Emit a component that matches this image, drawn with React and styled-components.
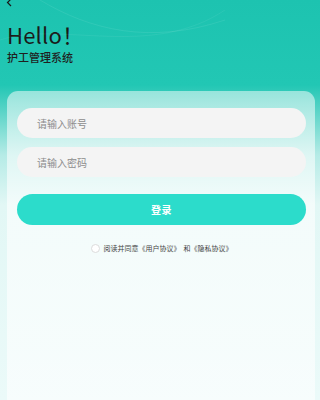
import React from 'react';
import styled, { createGlobalStyle } from 'styled-components';

const GlobalStyle = createGlobalStyle`
  html, body {
    margin: 0;
    padding: 0;
  }
  body {
    font-family: "Noto Sans CJK SC", "Noto Sans", sans-serif;
  }
  * {
    box-sizing: border-box;
  }
`;

const Page = styled.div`
  position: relative;
  width: 100%;
  min-height: 400px;
  display: flex;
  flex-direction: column;
  overflow: hidden;
  background: linear-gradient(
    180deg,
    #1dc3b0 0px,
    #22c7b4 85px,
    #62d6ca 115px,
    #b5ebe6 155px,
    #e2f7f5 205px,
    #ebfaf9 400px
  );
`;

const Wave = styled.svg`
  position: absolute;
  top: 0;
  left: 0;
  pointer-events: none;
`;

const BackButton = styled.div`
  height: 8px;
  padding-left: 6px;
  display: flex;
  align-items: flex-start;
`;

const Header = styled.div`
  padding: 12px 7px 0;
`;

const Title = styled.h1`
  margin: 0;
  font-size: 22px;
  line-height: 28px;
  font-weight: 400;
  color: #1a1a1a;
  letter-spacing: 0.2px;
`;

const Subtitle = styled.div`
  margin-top: 1px;
  font-size: 11px;
  line-height: 16px;
  font-weight: 500;
  color: #1f1f1f;
`;

const Card = styled.div`
  flex: 1;
  margin: 26px 5px 0 7px;
  padding: 17px 9px 0 10px;
  border-radius: 11px 11px 0 0;
  background: linear-gradient(
    180deg,
    rgba(255, 255, 255, 0.5) 0px,
    rgba(255, 255, 255, 0.55) 60px,
    rgba(255, 255, 255, 0.6) 120px
  );
  display: flex;
  flex-direction: column;
`;

const Field = styled.div`
  height: 30px;
  border-radius: 15px;
  background: #f4f4f4;
  display: flex;
  align-items: center;
  padding-left: 20px;
  font-size: 10px;
  color: #8c8c8c;
  & + & {
    margin-top: 9px;
  }
`;

const LoginButton = styled.div`
  margin-top: 17px;
  height: 31px;
  border-radius: 16px;
  background: #2cdccb;
  color: #fff;
  font-size: 10px;
  font-weight: 700;
  display: flex;
  align-items: center;
  justify-content: center;
  letter-spacing: 0.5px;
`;

const Agreement = styled.div`
  margin-top: 18px;
  display: flex;
  align-items: center;
  justify-content: center;
  font-size: 7px;
  color: #444;
  white-space: nowrap;
`;

const Check = styled.span`
  width: 9px;
  height: 9px;
  border-radius: 50%;
  border: 1px solid #dcdcdc;
  background: #fff;
  margin-right: 4px;
  flex-shrink: 0;
`;

const Gap = styled.span`
  display: inline-block;
  width: ${(p) => p.$w}px;
`;

const App = () => (
  <>
    <GlobalStyle />
    <Page>
      <Wave width="225" height="100" viewBox="0 0 225 100">
        <path d="M40 0 C90 30 150 45 225 20" fill="none" stroke="rgba(255,255,255,0.08)" strokeWidth="1" />
        <path d="M0 40 C60 20 150 60 225 10" fill="none" stroke="rgba(255,255,255,0.06)" strokeWidth="1" />
      </Wave>
      <BackButton>
        <svg width="7" height="8" viewBox="0 0 7 8">
          <path d="M5 -1 L1.5 2.5 L5 6" fill="none" stroke="#1a1a1a" strokeWidth="1.2" />
        </svg>
      </BackButton>
      <Header>
        <Title>Hello！</Title>
        <Subtitle>护工管理系统</Subtitle>
      </Header>
      <Card>
        <Field>请输入账号</Field>
        <Field>请输入密码</Field>
        <LoginButton>登录</LoginButton>
        <Agreement>
          <Check />
          阅读并同意《用户协议》<Gap $w={3} />和《隐私协议》
        </Agreement>
      </Card>
    </Page>
  </>
);

export default App;
